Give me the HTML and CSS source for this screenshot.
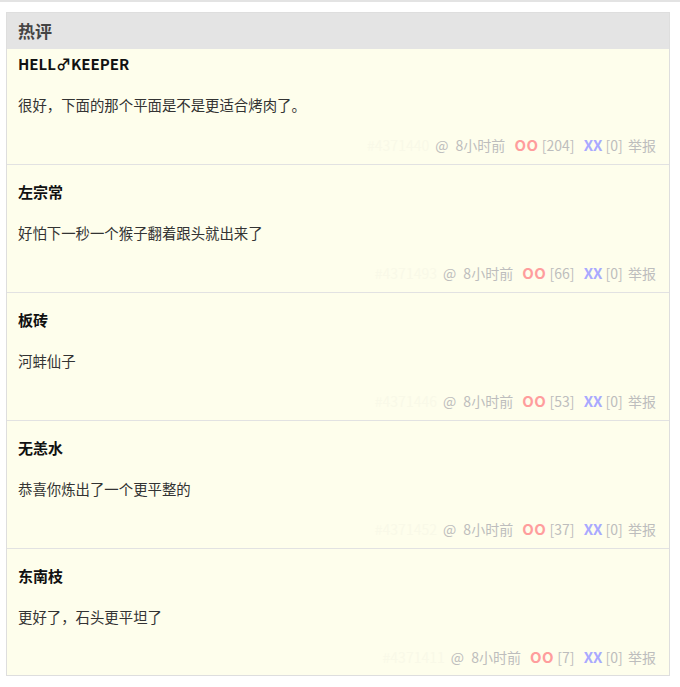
FILE: index.html
```html
<!DOCTYPE html>
<html lang="zh">
<head>
<meta charset="utf-8">
<link rel="stylesheet" href="styles.css">
</head>
<body>
<div class="topline"></div>
<div class="panel">
  <div class="panel-head">热评</div>
  <div class="item first">
    <div class="name">HELL♂KEEPER</div>
    <div class="text">很好，下面的那个平面是不是更适合烤肉了。</div>
    <div class="meta"><span class="hid">#4371440</span><span class="at">@</span> 8小时前 <span class="oo">OO</span> [204] <span class="xx">XX</span> [0] <span class="rep">举报</span></div>
  </div>
  <div class="item">
    <div class="name">左宗常</div>
    <div class="text">好怕下一秒一个猴子翻着跟头就出来了</div>
    <div class="meta"><span class="hid">#4371493</span><span class="at">@</span> 8小时前 <span class="oo">OO</span> [66] <span class="xx">XX</span> [0] <span class="rep">举报</span></div>
  </div>
  <div class="item">
    <div class="name">板砖</div>
    <div class="text">河蚌仙子</div>
    <div class="meta"><span class="hid">#4371446</span><span class="at">@</span> 8小时前 <span class="oo">OO</span> [53] <span class="xx">XX</span> [0] <span class="rep">举报</span></div>
  </div>
  <div class="item">
    <div class="name">无恙水</div>
    <div class="text">恭喜你炼出了一个更平整的</div>
    <div class="meta"><span class="hid">#4371452</span><span class="at">@</span> 8小时前 <span class="oo">OO</span> [37] <span class="xx">XX</span> [0] <span class="rep">举报</span></div>
  </div>
  <div class="item">
    <div class="name">东南枝</div>
    <div class="text">更好了，石头更平坦了</div>
    <div class="meta"><span class="hid">#4371411</span><span class="at">@</span> 8小时前 <span class="oo">OO</span> [7] <span class="xx">XX</span> [0] <span class="rep">举报</span></div>
  </div>
</div>
</body>
</html>
```

FILE: styles.css
```css
html, body {
  margin: 0;
  padding: 0;
  background: #ffffff;
  font-family: "Noto Sans CJK SC", "Noto Sans", sans-serif;
}
.topline {
  height: 2px;
  background: #e3e3e3;
}
.panel {
  margin: 10px 0 10px 6px;
  width: 662px;
  border: 1px solid #dedede;
  background: #fefeec;
}
.panel-head {
  background: #e4e4e4;
  height: 36px;
  line-height: 36px;
  padding-left: 11px;
  font-size: 17px;
  font-weight: bold;
  color: #444;
}
.item {
  padding: 15px 13px 9px 11px;
  border-bottom: 1px solid #e2e2e2;
  display: flex;
  flex-direction: column;
  gap: 19px;
}
.item:last-child {
  border-bottom: none;
  padding-bottom: 8px;
}
.item.first {
  padding-top: 3px;
}
.name {
  font-size: 15px;
  font-weight: bold;
  line-height: 24px;
  color: #111;
}
.text {
  font-size: 14.4px;
  line-height: 20px;
  color: #333;
}
.meta {
  text-align: right;
  font-size: 14px;
  line-height: 20px;
  color: #bdbdbd;
  margin-top: 1px;
  white-space: pre;
}
.hid {
  color: #f9f9e8;
  margin-right: 6px;
}
.at {
  margin-right: 4px;
}
.oo {
  color: #ff9d9d;
  font-weight: bold;
  font-size: 15px;
  letter-spacing: 0.5px;
  margin-left: 6px;
}
.xx {
  color: #a9a9ff;
  font-weight: bold;
  font-size: 15px;
  margin-left: 6px;
}
.rep {
  margin-left: 2px;
}
```
